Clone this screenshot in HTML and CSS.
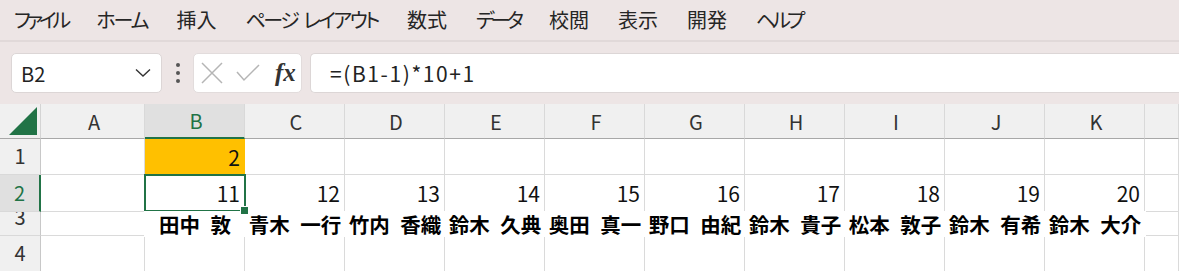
FILE: index.html
```html
<!DOCTYPE html>
<html lang="ja">
<head>
    <meta charset="UTF-8">
    <title>Excel</title>
    <link rel="stylesheet" href="styles.css">
</head>
<body>
    <nav class="menubar">
        <span class="kana">ファイル</span>
        <span class="kana home">ホーム</span>
        <span>挿入</span>
        <span class="kana wide">ページ レイアウト</span>
        <span>数式</span>
        <span class="kana">データ</span>
        <span>校閲</span>
        <span>表示</span>
        <span>開発</span>
        <span class="kana">ヘルプ</span>
    </nav>

    <div class="formula-bar">
        <div class="name-box">
            <span>B2</span>
            <svg width="16" height="10" viewBox="0 0 16 10"><polyline points="1,1.5 8,8 15,1.5" fill="none" stroke="#333" stroke-width="1.4"/></svg>
        </div>
        <div class="dots"><i></i><i></i><i></i></div>
        <div class="fx-box">
            <svg width="22" height="22" viewBox="0 0 22 22"><path d="M1 1 L21 21 M21 1 L1 21" stroke="#b5b5b5" stroke-width="1.5" fill="none"/></svg>
            <svg width="24" height="20" viewBox="0 0 24 20"><polyline points="1,9 8,17 23,2" stroke="#b5b5b5" stroke-width="1.5" fill="none"/></svg>
            <span class="fx">fx</span>
        </div>
        <div class="formula-input">=(B1-1)*10+1</div>
    </div>

    <div class="sheet">
        <!-- заголовки столбцов -->
        <div class="corner"><svg width="28" height="28" viewBox="0 0 28 28"><polygon points="28,0 28,28 0,28" fill="#217346"/></svg></div>
        <div class="col-head">A</div>
        <div class="col-head active">B</div>
        <div class="col-head">C</div>
        <div class="col-head">D</div>
        <div class="col-head">E</div>
        <div class="col-head">F</div>
        <div class="col-head">G</div>
        <div class="col-head">H</div>
        <div class="col-head">I</div>
        <div class="col-head">J</div>
        <div class="col-head">K</div>
        <div class="col-head"></div>

        <!-- строка 1 -->
        <div class="row-head"><span>1</span></div>
        <div class="cell"></div>
        <div class="cell num fill">2</div>
        <div class="cell"></div>
        <div class="cell"></div>
        <div class="cell"></div>
        <div class="cell"></div>
        <div class="cell"></div>
        <div class="cell"></div>
        <div class="cell"></div>
        <div class="cell"></div>
        <div class="cell"></div>
        <div class="cell"></div>

        <!-- строка 2 -->
        <div class="row-head active"><span>2</span></div>
        <div class="cell"></div>
        <div class="cell num selected">11</div>
        <div class="cell num">12</div>
        <div class="cell num">13</div>
        <div class="cell num">14</div>
        <div class="cell num">15</div>
        <div class="cell num">16</div>
        <div class="cell num">17</div>
        <div class="cell num">18</div>
        <div class="cell num">19</div>
        <div class="cell num">20</div>
        <div class="cell"></div>

        <!-- строка 3 -->
        <div class="row-head"><span>3</span></div>
        <div class="cell"></div>
        <div class="names">
            <span>田中 敦</span>
            <span>青木 一行</span>
            <span>竹内 香織</span>
            <span>鈴木 久典</span>
            <span>奥田 真一</span>
            <span>野口 由紀</span>
            <span>鈴木 貴子</span>
            <span>松本 敦子</span>
            <span>鈴木 有希</span>
            <span>鈴木 大介</span>
        </div>
        <div class="cell"></div>

        <!-- строка 4 -->
        <div class="row-head"><span>4</span></div>
        <div class="cell"></div>
        <div class="cell"></div>
        <div class="cell"></div>
        <div class="cell"></div>
        <div class="cell"></div>
        <div class="cell"></div>
        <div class="cell"></div>
        <div class="cell"></div>
        <div class="cell"></div>
        <div class="cell"></div>
        <div class="cell"></div>
        <div class="cell"></div>
    </div>
</body>
</html>
```

FILE: styles.css
```css
* {
    margin: 0;
    padding: 0;
    box-sizing: border-box;
}

body {
    font-family: "Noto Sans CJK JP", "Noto Sans", sans-serif;
    background-color: #ede5e5;
    color: #222;
    width: 1179px;
    height: 271px;
    overflow: hidden;
}

/* Меню */
.menubar {
    height: 42px;
    display: flex;
    align-items: center;
    gap: 29px;
    padding: 0 0 2px 14px;
    font-size: 20px;
    font-feature-settings: "palt";
    color: #262626;
    border-bottom: 2px solid #e1d9d9;
}

.menubar .kana {
    letter-spacing: -4px;
}

.menubar .kana.home {
    letter-spacing: -2px;
}

.menubar .kana.wide {
    letter-spacing: -2.5px;
    word-spacing: 4px;
}

/* Строка формул */
.formula-bar {
    height: 62px;
    display: flex;
    align-items: flex-start;
    padding-top: 11px;
    padding-left: 11px;
}

.name-box {
    width: 151px;
    height: 40px;
    background: #fff;
    border: 1px solid #dcd6d6;
    border-radius: 5px;
    display: flex;
    align-items: center;
    justify-content: space-between;
    padding: 0 10px 0 9px;
    font-size: 20px;
    color: #222;
}

.dots {
    width: 31px;
    height: 40px;
    display: flex;
    flex-direction: column;
    align-items: center;
    justify-content: center;
    gap: 4px;
}

.dots i {
    display: block;
    width: 4px;
    height: 4px;
    border-radius: 50%;
    background: #555;
}

.fx-box {
    width: 109px;
    height: 40px;
    background: #fff;
    border: 1px solid #e2dcdc;
    border-radius: 5px;
    display: flex;
    align-items: center;
    gap: 13px;
    padding-left: 7px;
}

.fx {
    font-family: "Liberation Serif", serif;
    font-style: italic;
    font-weight: bold;
    font-size: 25px;
    color: #333;
    margin-left: 2px;
}

.formula-input {
    flex: 1;
    height: 40px;
    margin-left: 8px;
    background: #fff;
    border: 1px solid #dcd6d6;
    border-right: none;
    border-radius: 5px 0 0 5px;
    display: flex;
    align-items: center;
    padding-left: 19px;
    font-size: 21px;
    letter-spacing: 1.6px;
    color: #222;
}

/* Лист */
.sheet {
    display: grid;
    grid-template-columns: 41px 104px repeat(10, 100px) 1fr;
    grid-template-rows: 35px 36px 37px 24px 36px;
    background: #fff;
}

.corner {
    background: #f0f0f0;
    border-right: 1px solid #d4d4d4;
    border-bottom: 1px solid #a8a8a8;
    display: flex;
    align-items: flex-end;
    justify-content: flex-end;
    padding: 0 3px 3px 0;
}

.col-head {
    background: #f0f0f0;
    border-right: 1px solid #d9d9d9;
    border-bottom: 1px solid #a8a8a8;
    display: flex;
    align-items: center;
    justify-content: center;
    font-size: 20px;
    color: #333;
    padding-left: 3px;
}

.col-head.active {
    background: #e0e0e0;
    border-bottom: 2px solid #217346;
    color: #217346;
}

.row-head {
    background: #f0f0f0;
    border-right: 1px solid #c8c8c8;
    border-bottom: 1px solid #d9d9d9;
    display: flex;
    align-items: flex-end;
    justify-content: center;
    overflow: hidden;
    font-size: 20px;
    color: #333;
}

.row-head span {
    display: block;
    height: 36px;
    line-height: 36px;
    flex-shrink: 0;
}

.row-head.active {
    background: #e0e0e0;
    border-right: 2px solid #217346;
    color: #217346;
}

.cell {
    border-right: 1px solid #dadada;
    border-bottom: 1px solid #dadada;
    font-size: 21px;
    color: #111;
}

.cell.num {
    display: flex;
    align-items: center;
    justify-content: flex-end;
    padding-right: 4px;
}

.cell.fill {
    background: #ffc000;
    border-color: #ffc000;
}

.cell.selected {
    position: relative;
}

.cell.selected::before {
    content: '';
    position: absolute;
    top: -1px;
    left: -1px;
    right: -2px;
    bottom: -1px;
    border: 2px solid #217346;
}

.cell.selected::after {
    content: '';
    position: absolute;
    right: -5px;
    bottom: -4px;
    width: 7px;
    height: 7px;
    background: #217346;
    border: 1px solid #fff;
    z-index: 3;
}

/* Имена поверх сетки */
.names {
    grid-column: 3 / span 10;
    margin: -1px;
    background: #fff;
    position: relative;
    z-index: 1;
    display: flex;
    padding-left: 1px;
}

.names span {
    width: 100px;
    flex-shrink: 0;
    text-align: center;
    font-size: 20.5px;
    font-weight: bold;
    line-height: 26px;
    color: #000;
    word-spacing: 6px;
    white-space: nowrap;
}
```
